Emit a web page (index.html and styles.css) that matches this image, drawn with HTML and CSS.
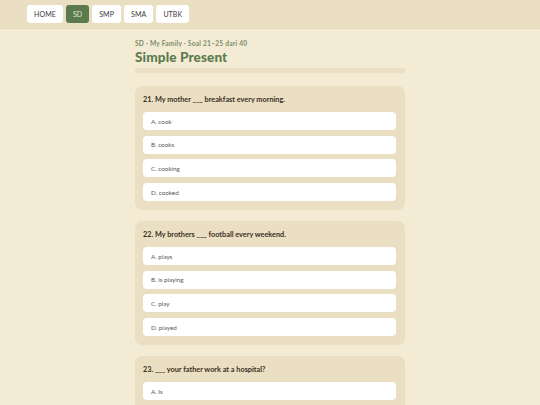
FILE: index.html
```html
<!DOCTYPE html>
<html lang="id">
<head>
<meta charset="utf-8">
<title>Simple Present</title>
<link rel="stylesheet" href="styles.css">
</head>
<body>
<header class="topbar">
  <nav class="nav">
    <a class="nav-btn">HOME</a>
    <a class="nav-btn active">SD</a>
    <a class="nav-btn">SMP</a>
    <a class="nav-btn">SMA</a>
    <a class="nav-btn">UTBK</a>
  </nav>
</header>
<main class="main">
  <div class="crumb">SD · My Family · Soal 21–25 dari 40</div>
  <h1 class="title">Simple Present</h1>
  <div class="progress"><div class="progress-fill" style="width:0%"></div></div>

  <section class="card">
    <div class="question">21. My mother ___ breakfast every morning.</div>
    <div class="options">
      <div class="option">A. cook</div>
      <div class="option">B. cooks</div>
      <div class="option">C. cooking</div>
      <div class="option">D. cooked</div>
    </div>
  </section>

  <section class="card">
    <div class="question">22. My brothers ___ football every weekend.</div>
    <div class="options">
      <div class="option">A. plays</div>
      <div class="option">B. is playing</div>
      <div class="option">C. play</div>
      <div class="option">D. played</div>
    </div>
  </section>

  <section class="card">
    <div class="question">23. ___ your father work at a hospital?</div>
    <div class="options">
      <div class="option">A. Is</div>
      <div class="option">B. Does</div>
      <div class="option">C. Do</div>
      <div class="option">D. Are</div>
    </div>
  </section>
</main>
</body>
</html>
```

FILE: styles.css
```css
* { box-sizing: border-box; }
html, body { margin: 0; padding: 0; }
body {
  background: #f4ebd5;
  font-family: "Lato", "Noto Sans", sans-serif;
  color: #3b2f1c;
}
.topbar {
  background: #eadfc2;
  border-bottom: 1px solid #e4d7b8;
  height: 29px;
  padding: 5px 27px 0;
}
.nav {
  display: flex;
  gap: 3px;
}
.nav-btn {
  display: flex;
  align-items: center;
  justify-content: center;
  height: 18px;
  padding: 0 7px;
  background: #ffffff;
  border-radius: 3px;
  font-size: 7px;
  color: #3b3b3b;
  letter-spacing: 0.1px;
}
.nav-btn.active {
  background: #5b7b4f;
  color: #dfe8d4;
}
.main {
  width: 270px;
  margin: 0 auto;
  padding-top: 10px;
}
.crumb {
  font-size: 6.6px;
  font-weight: 700;
  color: #7b8c69;
  line-height: 8px;
  letter-spacing: 0.25px;
}
.title {
  margin: 1px 0 0;
  font-size: 13.6px;
  line-height: 18px;
  font-weight: 900;
  color: #5b7b4f;
  letter-spacing: 0.1px;
}
.progress {
  margin-top: 2px;
  height: 5px;
  border-radius: 3px;
  background: #eadfc3;
}
.card {
  margin-top: 13px;
  background: #eadfc3;
  border-radius: 7px;
  padding: 9px 9px 9px 8px;
}
.card + .card { margin-top: 11px; }
.question {
  font-size: 7.3px;
  font-weight: 700;
  line-height: 10px;
  color: #3b2f1c;
}
.options {
  margin-top: 7px;
  display: flex;
  flex-direction: column;
  gap: 5.7px;
}
.option {
  background: #ffffff;
  border-radius: 4px;
  height: 18px;
  display: flex;
  align-items: center;
  padding: 0 8px;
  font-size: 6.3px;
  color: #5c5a55;
}
```
